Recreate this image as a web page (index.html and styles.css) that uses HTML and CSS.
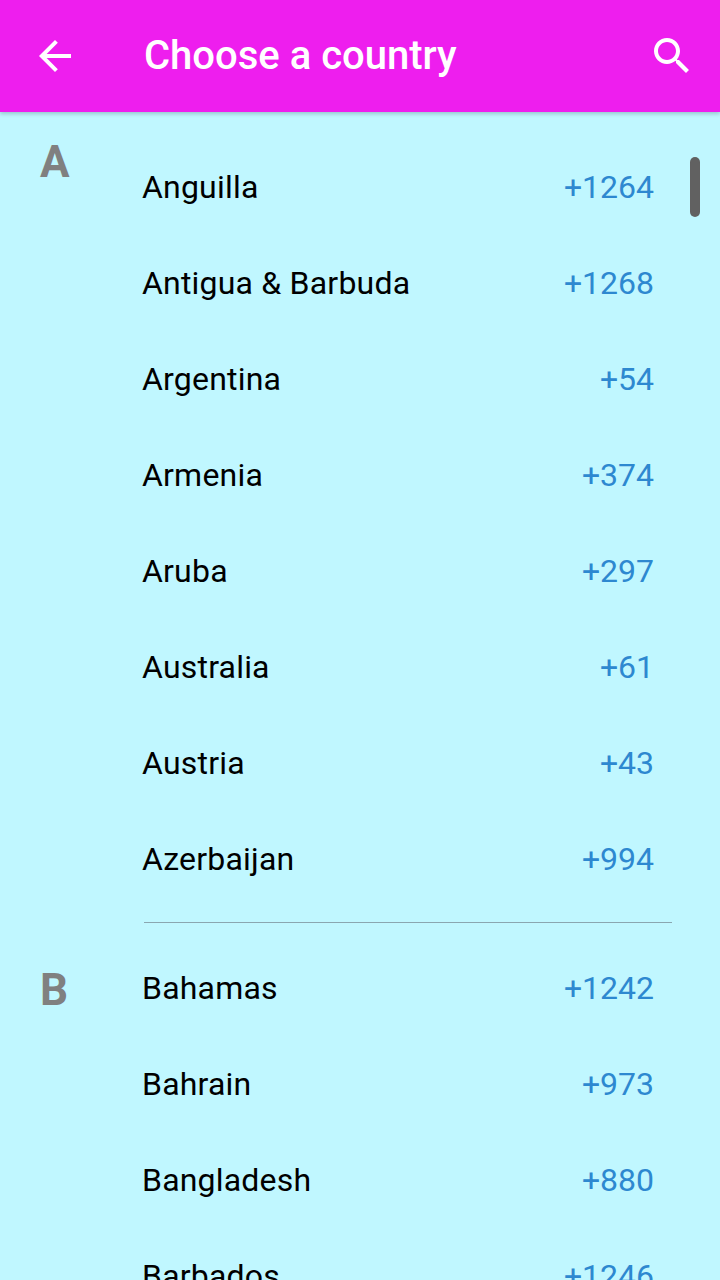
FILE: index.html
```html
<!DOCTYPE html>
<html lang="en">
<head>
    <meta charset="UTF-8">
    <title>Choose a country</title>
    <link rel="stylesheet" href="styles.css">
</head>
<body>
    <div class="app">
        <div class="app-bar">
            <svg class="back-icon" width="48" height="48" viewBox="0 0 24 24"><path d="M20 11H7.83l5.59-5.59L12 4l-8 8 8 8 1.41-1.41L7.83 13H20v-2z" fill="#fff"/></svg>
            <div class="app-title">Choose a country</div>
            <svg class="search-icon" width="48" height="48" viewBox="0 0 24 24"><path d="M15.5 14h-.79l-.28-.27C15.41 12.59 16 11.11 16 9.5 16 5.91 13.09 3 9.5 3S3 5.91 3 9.5 5.91 16 9.5 16c1.61 0 3.09-.59 4.23-1.57l.27.28v.79l5 4.99L20.49 19l-4.99-5zm-6 0C7.01 14 5 11.99 5 9.5S7.01 5 9.5 5 14 7.01 14 9.5 11.99 14 9.5 14z" fill="#fff"/></svg>
        </div>
        <div class="list">
            <div class="scroll-thumb"></div>
            <div class="section">
                <div class="letter letter-pinned">A</div>
                <div class="rows">
                    <div class="row"><span class="name">Anguilla</span><span class="code">+1264</span></div>
                    <div class="row"><span class="name">Antigua &amp; Barbuda</span><span class="code">+1268</span></div>
                    <div class="row"><span class="name">Argentina</span><span class="code">+54</span></div>
                    <div class="row"><span class="name">Armenia</span><span class="code">+374</span></div>
                    <div class="row"><span class="name">Aruba</span><span class="code">+297</span></div>
                    <div class="row"><span class="name">Australia</span><span class="code">+61</span></div>
                    <div class="row"><span class="name">Austria</span><span class="code">+43</span></div>
                    <div class="row"><span class="name">Azerbaijan</span><span class="code">+994</span></div>
                </div>
            </div>
            <div class="divider"></div>
            <div class="section">
                <div class="letter">B</div>
                <div class="rows">
                    <div class="row"><span class="name">Bahamas</span><span class="code">+1242</span></div>
                    <div class="row"><span class="name">Bahrain</span><span class="code">+973</span></div>
                    <div class="row"><span class="name">Bangladesh</span><span class="code">+880</span></div>
                    <div class="row"><span class="name">Barbados</span><span class="code">+1246</span></div>
                </div>
            </div>
        </div>
    </div>
</body>
</html>
```

FILE: styles.css
```css
html, body {
    margin: 0;
    padding: 0;
    height: 100%;
    overflow: hidden;
}
body {
    font-family: 'Roboto', sans-serif;
    background: #c0f7ff;
}
.app {
    display: flex;
    flex-direction: column;
    height: 1280px;
    overflow: hidden;
}
.app-bar {
    display: flex;
    align-items: center;
    flex: none;
    height: 112px;
    padding: 0 24px 0 31px;
    background: #ee1eee;
    box-shadow: 0 2px 4px rgba(0,0,0,0.2);
    position: relative;
    z-index: 1;
}
.app-title {
    flex: 1;
    margin-left: 65px;
    padding-bottom: 2px;
    color: #fff;
    font-size: 40px;
    font-weight: 500;
}
.list {
    flex: 1;
    position: relative;
    overflow: hidden;
    padding-top: 27px;
}
.scroll-thumb {
    position: absolute;
    top: 45px;
    right: 20px;
    width: 10px;
    height: 60px;
    border-radius: 5px;
    background: #616161;
}
.section {
    display: flex;
}
.letter {
    flex: none;
    width: 143px;
    box-sizing: border-box;
    margin-top: 27px;
    padding-left: 40px;
    color: #808080;
    font-size: 44px;
    font-weight: 700;
    line-height: 46px;
}
.letter-pinned {
    margin-top: 0;
}
.rows {
    flex: 1;
    padding-right: 66px;
}
.row {
    display: flex;
    justify-content: space-between;
    align-items: center;
    height: 96px;
    font-size: 32px;
}
.name {
    margin-left: -1px;
    color: #000;
    letter-spacing: 0.2px;
}
.code {
    color: #2d88d0;
}
.divider {
    height: 1px;
    margin: 15px 48px 17px 144px;
    background: #8aa6b0;
}
```
